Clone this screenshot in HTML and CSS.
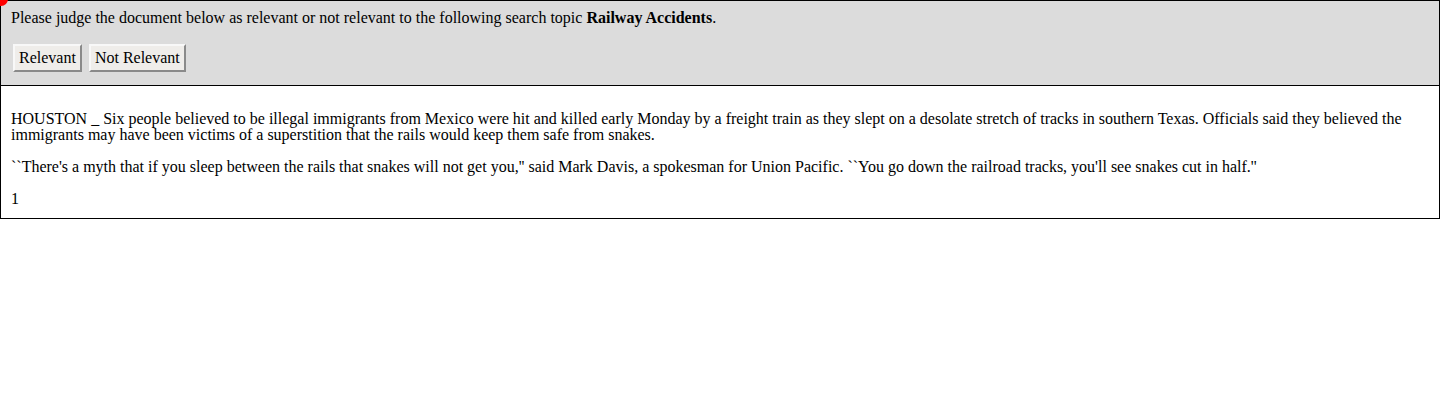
FILE: index.html
```html
<!DOCTYPE html>
<html>
<head>
<meta charset="utf-8">
<link rel="stylesheet" href="styles.css">
</head>
<body>
<span class="dot"></span>
<div class="judge">
  <p class="prompt">Please judge the document below as relevant or not relevant to the following search topic <b>Railway Accidents</b>.</p>
  <div class="actions">
    <button class="btn">Relevant</button>
    <button class="btn">Not Relevant</button>
  </div>
</div>
<div class="doc">
  <p>HOUSTON _ Six people believed to be illegal immigrants from Mexico were hit and killed early Monday by a freight train as they slept on a desolate stretch of tracks in southern Texas. Officials said they believed the immigrants may have been victims of a superstition that the rails would keep them safe from snakes.</p>
  <p>``There's a myth that if you sleep between the rails that snakes will not get you,'' said Mark Davis, a spokesman for Union Pacific. ``You go down the railroad tracks, you'll see snakes cut in half.''</p>
  <p>1</p>
</div>
</body>
</html>
```
FILE: styles.css
```css
html, body {
  margin: 0;
  padding: 0;
  background: #fff;
}
body {
  font-family: "Liberation Serif", "Times New Roman", serif;
  font-size: 16px;
  line-height: 16px;
  color: #000;
  position: relative;
}
.dot {
  position: absolute;
  left: -6px;
  top: -8px;
  width: 14px;
  height: 14px;
  border-radius: 50%;
  background: #f00;
}
.judge {
  background: #dcdcdc;
  border: 1px solid #000;
  padding: 9px 10px 13px;
}
.prompt {
  margin: 0;
}
.actions {
  display: flex;
  gap: 7px;
  margin-top: 18px;
  padding-left: 2px;
}
.btn {
  font-family: "Liberation Serif", "Times New Roman", serif;
  font-size: 16px;
  line-height: 16px;
  color: #000;
  background: #efedea;
  border: 2px solid;
  border-color: #f8f8f8 #8a8a8a #8a8a8a #f8f8f8;
  padding: 4px 4px;
  margin: 0;
  border-radius: 0;
}
.doc {
  border: 1px solid #000;
  border-top: none;
  padding: 9px 10px 11px;
}
.doc p {
  margin: 16px 0 0;
}
```
